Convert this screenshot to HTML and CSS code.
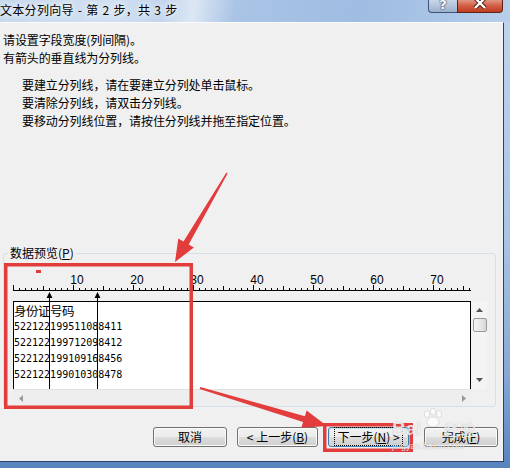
FILE: index.html
```html
<!DOCTYPE html>
<html lang="zh-CN">
<head>
    <meta charset="UTF-8">
    <title>文本分列向导 - 第 2 步，共 3 步</title>
    <link rel="stylesheet" href="styles.css">
</head>
<body>
<div class="window">
    <div class="titlebar">
        <span class="title">文本分列向导 - 第 2 步，共 3 步</span>
        <div class="caption-btns">
            <span class="btn-help">?</span>
            <span class="btn-close">
                <svg width="14" height="12" viewBox="0 0 14 12">
                    <path d="M2 1 L12 11 M12 1 L2 11" stroke="#4a1a12" stroke-width="4.2" fill="none"/>
                    <path d="M2 1 L12 11 M12 1 L2 11" stroke="#fff" stroke-width="2.4" fill="none"/>
                </svg>
            </span>
        </div>
    </div>

    <div class="client">
        <p class="line">请设置字段宽度(列间隔)。</p>
        <p class="line">有箭头的垂直线为分列线。</p>
        <div class="hints">
            <p class="line">要建立分列线，请在要建立分列处单击鼠标。</p>
            <p class="line">要清除分列线，请双击分列线。</p>
            <p class="line">要移动分列线位置，请按住分列线并拖至指定位置。</p>
        </div>

        <fieldset class="group">
            <legend>数据预览(<u>P</u>)</legend>
            <div class="preview">
                <svg class="ruler" width="474" height="39" viewBox="0 0 474 39">
                    <defs>
                        <pattern id="tick1" width="6" height="2" patternUnits="userSpaceOnUse">
                            <rect width="1" height="2" fill="#000"/>
                        </pattern>
                        <pattern id="tick5" width="30" height="4" patternUnits="userSpaceOnUse">
                            <rect width="1" height="4" fill="#000"/>
                        </pattern>
                        <pattern id="tick10" width="60" height="5" patternUnits="userSpaceOnUse">
                            <rect width="1" height="5" fill="#000"/>
                        </pattern>
                    </defs>
                    <rect x="23" y="8" width="5" height="3" fill="#e23c3c"/>
                    <g class="ruler-nums">
                        <text x="64" y="22">10</text>
                        <text x="124" y="22">20</text>
                        <text x="184" y="22">30</text>
                        <text x="244" y="22">40</text>
                        <text x="304" y="22">50</text>
                        <text x="364" y="22">60</text>
                        <text x="424" y="22">70</text>
                    </g>
                    <rect x="0" y="26" width="458" height="2" fill="url(#tick1)"/>
                    <rect x="0" y="24" width="458" height="4" fill="url(#tick5)"/>
                    <rect x="0" y="23" width="458" height="5" fill="url(#tick10)"/>
                    <rect x="0" y="28" width="458" height="1" fill="#000"/>
                </svg>

                <div class="sheet">
                    <div class="data">
                        <div class="row head">身份证号码</div>
                        <div class="row">522122199511088411</div>
                        <div class="row">522122199712098412</div>
                        <div class="row">522122199109168456</div>
                        <div class="row">522122199010308478</div>
                    </div>
                    <div class="vscroll">
                        <svg width="7" height="4" viewBox="0 0 7 4"><path d="M0 4 L3.5 0 L7 4 Z" fill="#555"/></svg>
                        <span class="thumb"></span>
                        <span class="spacer"></span>
                        <svg width="7" height="4" viewBox="0 0 7 4"><path d="M0 0 L3.5 4 L7 0 Z" fill="#555"/></svg>
                    </div>
                    <div class="hscroll">
                        <svg width="4" height="7" viewBox="0 0 4 7"><path d="M4 0 L0 3.5 L4 7 Z" fill="#999"/></svg>
                        <svg width="4" height="7" viewBox="0 0 4 7"><path d="M0 0 L4 3.5 L0 7 Z" fill="#999"/></svg>
                    </div>
                    <div class="corner"></div>
                </div>

                <svg class="breaks" width="474" height="127" viewBox="0 0 474 127">
                    <path d="M36.5 30 L33.5 36 L39.5 36 Z M84.5 30 L81.5 36 L87.5 36 Z" fill="#000"/>
                    <path d="M36.5 35 V127 M84.5 35 V127" stroke="#000" stroke-width="1"/>
                </svg>
            </div>
        </fieldset>

        <div class="buttons">
            <button class="btn">取消</button>
            <button class="btn btn-nav">&lt; 上一步(<u>B</u>)</button>
            <button class="btn btn-nav btn-default"><span class="focus">下一步(<u>N</u>) &gt;</span></button>
            <button class="btn btn-finish">完成(<u>F</u>)</button>
        </div>
    </div>

    <svg class="marks" width="510" height="468" viewBox="0 0 510 468">
        <rect x="5.75" y="264.75" width="185.5" height="142.5" fill="none" stroke="#e23c3c" stroke-width="3.5"/>
        <rect x="324.75" y="424.75" width="86.5" height="25.5" fill="none" stroke="#e23c3c" stroke-width="3.5"/>
        <path d="M227.6 173.4 L188.7 244.5 L193.9 247.5 L175 262 L178.3 238.5 L183.5 241.5 L226.4 172.6 Z" fill="#e23c3c"/>
        <path d="M200.3 387 L304.9 416.2 L306.6 410.5 L327 426 L301.4 427.7 L303.1 422 L199.7 389 Z" fill="#e23c3c"/>
    </svg>

    <div class="watermark">
        <div class="wm-top">
            <span class="wm-bai">Bai</span>
            <svg class="wm-paw" width="22" height="20" viewBox="0 0 22 20">
                <ellipse cx="5" cy="6" rx="2.6" ry="3.4"/>
                <ellipse cx="11" cy="3.6" rx="2.6" ry="3.4"/>
                <ellipse cx="17" cy="6" rx="2.6" ry="3.4"/>
                <ellipse cx="11" cy="14" rx="6" ry="5"/>
            </svg>
            <span class="wm-jy">经验</span>
        </div>
        <div class="wm-url">jingyan.baidu.com</div>
    </div>
</div>
</body>
</html>
```

FILE: styles.css
```css
* {
    margin: 0;
    padding: 0;
    box-sizing: border-box;
}
body {
    width: 510px;
    height: 468px;
    overflow: hidden;
    font-family: "Noto Sans CJK SC", sans-serif;
    font-size: 12px;
    color: #000;
}
.window {
    position: relative;
    width: 510px;
    height: 468px;
    background: linear-gradient(180deg, #c0d5ee 0%, #a9c4e5 50%, #86a9d6 80%, #5783bd 100%);
}

/* title bar */
.titlebar {
    display: flex;
    justify-content: space-between;
    height: 22px;
    background: linear-gradient(100deg, #c6d8ed 0%, #d0e0f1 22%, #c2d5ec 32%, #dce7f4 38%, #a9c4e5 46%, #9fbde2 70%, #aac5e6 88%, #b8cfea 100%);
}
.title {
    line-height: 20px;
    letter-spacing: 0.3px;
    word-spacing: 1px;
    white-space: nowrap;
    text-shadow: 0 0 5px #fff, 0 0 9px #fff;
}
.caption-btns {
    display: flex;
    height: 13px;
    margin-right: 7px;
}
.btn-help,
.btn-close {
    position: relative;
    overflow: hidden;
    height: 13px;
    border: 1px solid #3f5476;
    border-top: none;
}
.btn-help {
    width: 29px;
    border-right: none;
    border-radius: 0 0 0 4px;
    background: linear-gradient(180deg, #c9d6e6 0%, #b3c4da 50%, #9cb1cc 100%);
    color: #fff;
    font: bold 13px "DejaVu Sans", sans-serif;
    line-height: 10px;
    text-align: center;
    text-shadow: 0 0 2px #1e2f4a, 0 0 1px #1e2f4a;
}
.btn-close {
    width: 46px;
    border-color: #5e2319;
    border-radius: 0 0 4px 0;
    background: linear-gradient(180deg, #e39685 0%, #d05c42 50%, #c13c20 100%);
}
.btn-close svg {
    position: absolute;
    left: 15px;
    top: -3px;
}

/* client area */
.client {
    width: 504px;
    height: 440px;
    padding-top: 8px;
    background: #f0f0f0;
    border-top: 1px solid #f9fbfd;
    border-right: 1px solid #2c4268;
    border-bottom: 1px solid #2c4268;
}
.line {
    padding-left: 3px;
    line-height: 18px;
    letter-spacing: -0.1px;
    white-space: nowrap;
}
.hints {
    margin-top: 9px;
    padding-left: 19px;
}

/* data preview group */
.group {
    min-width: 0;
    margin: 116px 7px 0 3px;
    padding: 2px 8px 0 9px;
    border: 1px solid #d5dfe5;
    border-radius: 3px;
}
.group legend {
    margin-left: -5px;
    padding: 0 2px;
    line-height: 14px;
}
.preview {
    position: relative;
    width: 474px;
    height: 144px;
}
.ruler {
    display: block;
}
.ruler-nums text {
    font-family: "Liberation Sans", sans-serif;
    font-size: 12px;
    text-anchor: middle;
    fill: #000;
}
.sheet {
    display: grid;
    grid-template-columns: 458px 16px;
    grid-template-rows: 88px 17px;
}
.data {
    overflow: hidden;
    padding-top: 1px;
    background: #fff;
    border: 1px solid #000;
    border-bottom: none;
}
.row {
    height: 16px;
    font: 10px/16px "DejaVu Sans Mono", monospace;
    white-space: nowrap;
}
.row.head {
    font: 12.5px/16px "Noto Sans CJK SC", sans-serif;
    letter-spacing: -0.5px;
}
.vscroll {
    display: flex;
    flex-direction: column;
    align-items: center;
    padding: 7px 0 7px 1px;
    background: #f4f4f4;
}
.thumb {
    width: 14px;
    height: 14px;
    margin-top: 6px;
    border: 1px solid #9a9a9a;
    border-radius: 2px;
    background: linear-gradient(90deg, #f3f3f3 0%, #e8e8e8 50%, #d6d6d6 100%);
}
.spacer {
    flex: 1;
}
.hscroll {
    display: flex;
    align-items: center;
    justify-content: space-between;
    padding: 0 5px 0 6px;
    background: #eeeeee;
    border-top: 1px solid #e2e2e2;
}
.corner {
    background: #f0f0f0;
}
.breaks {
    position: absolute;
    left: 0;
    top: 0;
    pointer-events: none;
}

/* buttons */
.buttons {
    display: flex;
    gap: 10px;
    margin-top: 20px;
    padding-left: 153px;
}
.btn {
    width: 74px;
    height: 20px;
    border: 1px solid #707070;
    border-radius: 3px;
    background: linear-gradient(180deg, #f2f2f2 0%, #ebebeb 50%, #dddddd 51%, #cfcfcf 100%);
    box-shadow: inset 0 0 0 1px #fbfbfb;
    font: 12px "Noto Sans CJK SC", sans-serif;
    line-height: 16px;
    color: #000;
}
.btn-nav {
    width: 81px;
}
.btn-default {
    border-color: #3c7fb1;
    box-shadow: inset 0 0 0 1px #c4e5f6;
}
.btn-default .focus {
    padding: 0 2px;
    outline: 1px dotted #000;
    outline-offset: 0;
}
.btn-finish {
    margin-left: 5px;
}

/* annotations laid over the dialog */
.marks {
    position: absolute;
    left: 0;
    top: 0;
    pointer-events: none;
}
.watermark {
    position: absolute;
    left: 392px;
    top: 406px;
    color: rgba(255, 255, 255, 0.8);
    text-shadow: 0 0 1px rgba(90, 90, 90, 0.45);
    pointer-events: none;
}
.wm-top {
    display: flex;
    align-items: flex-end;
    height: 34px;
}
.wm-bai {
    font: bold 19px/22px "Liberation Sans", sans-serif;
}
.wm-paw {
    align-self: flex-start;
    margin-top: 2px;
    fill: rgba(255, 255, 255, 0.75);
    stroke: rgba(120, 120, 120, 0.35);
    stroke-width: 0.6;
}
.wm-jy {
    font-size: 16px;
    line-height: 22px;
}
.wm-url {
    font: 9px/12px "Liberation Sans", sans-serif;
}
```
